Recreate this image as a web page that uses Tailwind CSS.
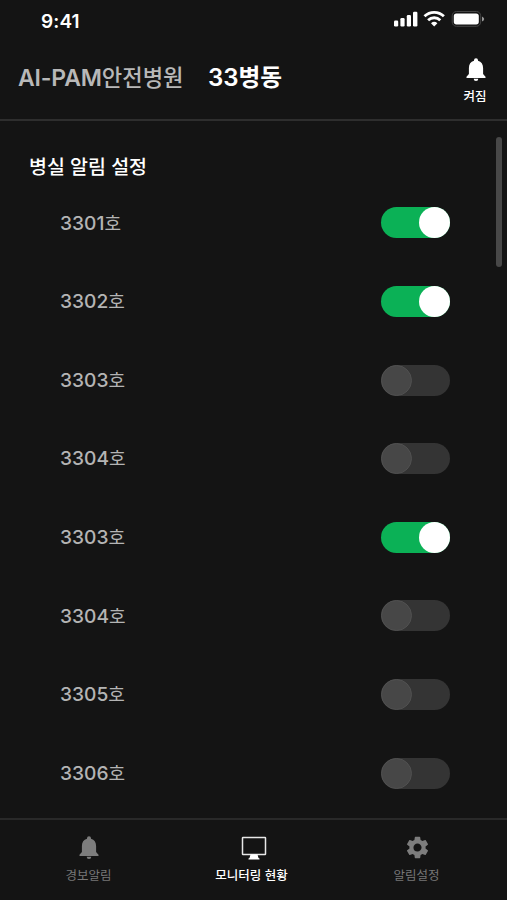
<!DOCTYPE html>
<html lang="ko">
<head>
<meta charset="utf-8">
<title>병실 알림 설정</title>
<script src="https://cdn.jsdelivr.net/npm/@tailwindcss/browser@4"></script>
</head>
<body class="bg-[#141414]">
<div class="relative flex h-[900px] w-[507px] flex-col overflow-hidden bg-[#141414] font-['Inter','Noto_Sans_CJK_KR',sans-serif] text-white">
  <div class="flex h-[42px] shrink-0 items-center justify-between pl-[41px] pr-[22px]">
    <span class="text-[19px] font-semibold leading-none tracking-[0.1px]">9:41</span>
    <svg class="-mt-[6px] h-[18px] w-[92px]" viewBox="0 0 92 18" fill="#fff">
      <rect x="1" y="11.5" width="4.2" height="6" rx="1.2"/><rect x="7.4" y="9" width="4.2" height="8.5" rx="1.2"/><rect x="13.8" y="6" width="4.2" height="11.5" rx="1.2"/><rect x="20" y="2.8" width="4.4" height="14.7" rx="1.2"/>
      <g fill="none" stroke="#fff" stroke-width="2.8"><path d="M31.5 7.2a14 14 0 0 1 19.4 0"/><path d="M35.1 11.2a8.8 8.8 0 0 1 12.2 0"/></g>
      <path d="M41.2 17.4l-3.2-3.2a4.8 4.8 0 0 1 6.4 0z"/>
      <rect x="59.2" y="2.5" width="28.500" height="14.8" rx="4.3" fill="none" stroke="#454545"/>
      <rect x="60.800" y="4.4" width="25" height="11" rx="2.6"/><path d="M89 7.4q2.2 1 2.2 2.5T89 12.4z" fill="#999"/>
    </svg>
  </div>
  <header class="flex h-[79px] shrink-0 items-start border-b-2 border-[#2e2e2e] pl-[18px] pr-[19px]">
    <h1 class="mt-[19px] flex h-[34px] w-[190px] items-baseline whitespace-nowrap font-medium leading-[34px] text-[#b8b8b8]"><span class="text-[23px] font-semibold tracking-[-0.150px]">AI-PAM</span><span class="text-[22.200px]">안전병원</span></h1>
    <div class="mt-[19px] flex h-[34px] items-baseline whitespace-nowrap font-semibold leading-[34px]"><span class="text-[24px]">33</span><span class="text-[23.700px] font-bold">병동</span></div>
    <button class="ml-auto flex w-[24px] flex-col items-center">
      <svg class="mt-[16px] h-[24px] w-[20px]" viewBox="0 0 20 24" fill="#fff"><path d="M8 2.2a2 2 0 0 1 4 0v.6c3.4.9 5.1 3.6 5.1 7.2v6l2.4 2.8v1.1H.5v-1.1L2.9 16v-6c0-3.600 1.700-6.300 5.100-7.200zM7.700 20.800h4.600a2.300 2.300 0 0 1-4.600 0z"/></svg>
      <span class="relative -left-[1px] mt-[5px] whitespace-nowrap text-[12.500px] font-medium leading-[20px]">켜짐</span>
    </button>
  </header>
  <main class="relative flex h-[697px] shrink-0 flex-col overflow-hidden">
    <h2 class="ml-[29px] mt-[32px] h-[30px] whitespace-nowrap text-[19.500px] font-medium leading-[28px]">병실 알림 설정</h2>
    <ul id="rooms" class="flex flex-col"></ul>
    <div class="absolute right-[5.500px] top-[16px] h-[130px] w-[6px] rounded-full bg-[#484848]"></div>
  </main>
  <nav class="flex h-[82px] shrink-0 border-t-2 border-[#292929] text-[12.500px] leading-[20px] text-[#777]">
    <div class="flex w-[177px] flex-col items-center">
      <svg class="mt-[16px] h-[24px] w-[20px]" viewBox="0 0 20 24" fill="#7d7d7d"><path d="M8 2.200a2 2 0 0 1 4 0v.600c3.400.900 5.100 3.600 5.100 7.200v6l2.400 2.800v1.100H.5v-1.100L2.900 16v-6c0-3.600 1.700-6.300 5.100-7.200zM7.700 20.800h4.600a2.300 2.300 0 0 1-4.600 0z"/></svg>
      <span class="mt-[6px]">경보알림</span>
    </div>
    <div class="flex w-[149px] flex-col items-center text-white">
      <svg class="ml-[5px] mt-[16px] h-[24px] w-[26px]" viewBox="0 0 26 24" fill="#fff"><rect x="1.500" y="1.500" width="23" height="17" rx=".5" fill="none" stroke="#e8e8e8" stroke-width="1.500"/><path d="M9.500 18.500h7l1 3.500 1 .5v1h-11v-1l1-.5z"/></svg>
      <span class="mt-[6px] font-medium">모니터링 현황</span>
    </div>
    <div class="flex w-[181px] flex-col items-center">
      <svg class="ml-[2px] mt-[14px] h-[27px] w-[27px]" viewBox="0 0 24 24" fill="#7d7d7d"><path d="M19.140 12.940c.040-.300.060-.610.060-.940 0-.320-.020-.640-.070-.940l2.030-1.580a.49.49 0 0 0 .12-.61l-1.920-3.320a.488.488 0 0 0-.59-.22l-2.390.96c-.5-.38-1.030-.7-1.620-.94l-.36-2.540a.484.484 0 0 0-.48-.41h-3.840c-.24 0-.43.17-.47.41l-.36 2.540c-.59.24-1.130.57-1.620.94l-2.390-.96c-.22-.08-.47 0-.59.22L2.740 8.870c-.12.21-.08.470.12.610l2.030 1.580c-.05.300-.09.630-.09.940s.02.640.07.940l-2.030 1.580a.49.49 0 0 0-.12.610l1.920 3.320c.12.220.37.290.59.220l2.390-.960c.5.380 1.030.700 1.620.940l.36 2.540c.05.240.24.410.48.410h3.840c.24 0 .44-.170.470-.410l.36-2.540c.59-.240 1.130-.560 1.620-.940l2.390.960c.22.080.47 0 .59-.220l1.920-3.320c.12-.220.070-.470-.12-.610l-2.010-1.580zM12 15.600A3.610 3.610 0 0 1 8.400 12c0-1.980 1.620-3.600 3.600-3.600s3.600 1.620 3.600 3.600-1.620 3.600-3.600 3.600z"/></svg>
      <span class="mt-[5px]">알림설정</span>
    </div>
  </nav>
</div>
<script>
  const rooms = [['3301', 1], ['3302', 1], ['3303', 0], ['3304', 0], ['3303', 1], ['3304', 0], ['3305', 0], ['3306', 0]];
  document.getElementById('rooms').innerHTML = rooms.map(([n, on]) => `
    <li class="flex h-[78.640px] shrink-0 items-start justify-between pl-[60px] pr-[57px]">
      <span class="mt-[24.500px] flex h-[30px] items-baseline leading-[30px] text-[#b4b4b4]"><span class="text-[19.200px] font-[450]">${n}</span><span class="text-[18px]">호</span></span>
      ${on
        ? '<span class="mt-[24.300px] flex h-[31px] w-[69px] justify-end rounded-full bg-[#0bb156]"><i class="h-[31px] w-[31px] rounded-full bg-white"></i></span>'
        : '<span class="mt-[24.300px] flex h-[31px] w-[69px] rounded-full bg-[#343434]"><i class="h-[31px] w-[31px] rounded-full border border-[#505050] bg-[#474747]"></i></span>'}
    </li>`).join('');
</script>
</body>
</html>
